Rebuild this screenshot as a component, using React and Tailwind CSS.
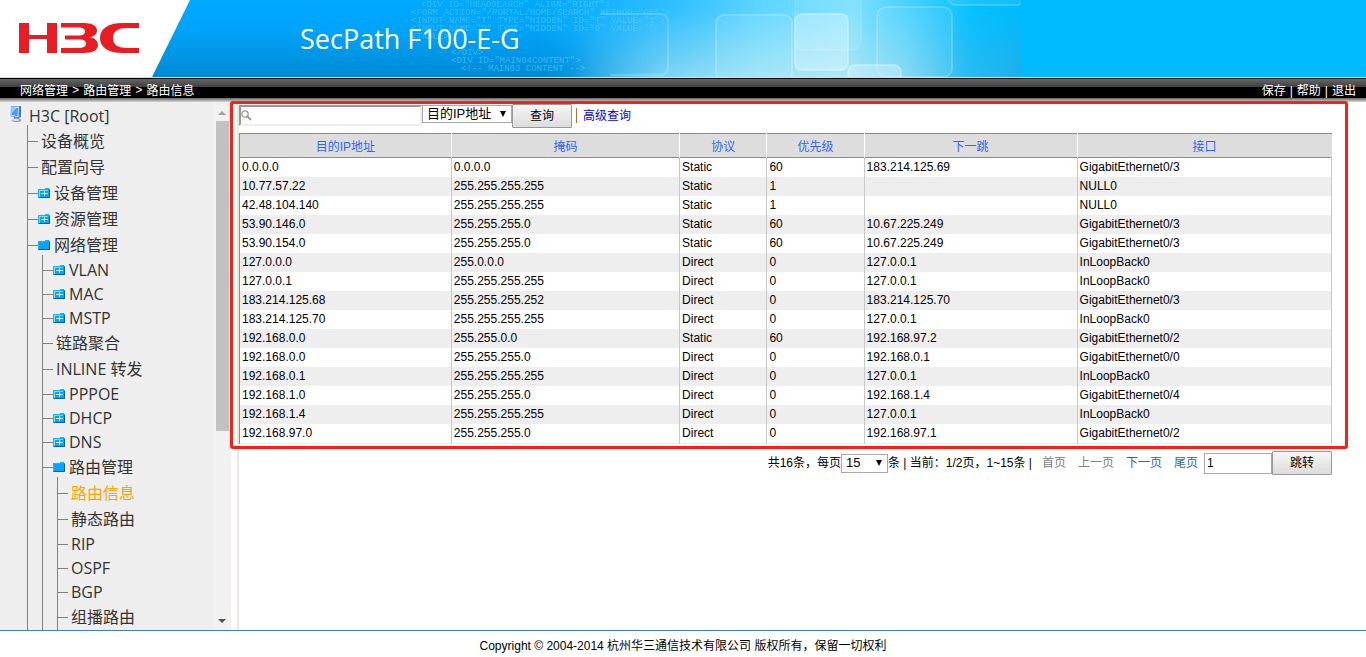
import React from "react";

const TREE = [
  { label: "设备概览" },
  { label: "配置向导" },
  { label: "设备管理", folder: true },
  { label: "资源管理", folder: true },
  {
    label: "网络管理",
    folder: true,
    children: [
      { label: "VLAN", folder: true },
      { label: "MAC", folder: true },
      { label: "MSTP", folder: true },
      { label: "链路聚合" },
      { label: "INLINE 转发" },
      { label: "PPPOE", folder: true },
      { label: "DHCP", folder: true },
      { label: "DNS", folder: true },
      {
        label: "路由管理",
        folder: true,
        children: [
          { label: "路由信息", active: true },
          { label: "静态路由" },
          { label: "RIP" },
          { label: "OSPF" },
          { label: "BGP" },
          { label: "组播路由" },
        ],
      },
    ],
  },
];

const COLUMNS = ["目的IP地址", "掩码", "协议", "优先级", "下一跳", "接口"];

const ROUTES = [
  ["0.0.0.0", "0.0.0.0", "Static", "60", "183.214.125.69", "GigabitEthernet0/3"],
  ["10.77.57.22", "255.255.255.255", "Static", "1", "", "NULL0"],
  ["42.48.104.140", "255.255.255.255", "Static", "1", "", "NULL0"],
  ["53.90.146.0", "255.255.255.0", "Static", "60", "10.67.225.249", "GigabitEthernet0/3"],
  ["53.90.154.0", "255.255.255.0", "Static", "60", "10.67.225.249", "GigabitEthernet0/3"],
  ["127.0.0.0", "255.0.0.0", "Direct", "0", "127.0.0.1", "InLoopBack0"],
  ["127.0.0.1", "255.255.255.255", "Direct", "0", "127.0.0.1", "InLoopBack0"],
  ["183.214.125.68", "255.255.255.252", "Direct", "0", "183.214.125.70", "GigabitEthernet0/3"],
  ["183.214.125.70", "255.255.255.255", "Direct", "0", "127.0.0.1", "InLoopBack0"],
  ["192.168.0.0", "255.255.0.0", "Static", "60", "192.168.97.2", "GigabitEthernet0/2"],
  ["192.168.0.0", "255.255.255.0", "Direct", "0", "192.168.0.1", "GigabitEthernet0/0"],
  ["192.168.0.1", "255.255.255.255", "Direct", "0", "127.0.0.1", "InLoopBack0"],
  ["192.168.1.0", "255.255.255.0", "Direct", "0", "192.168.1.4", "GigabitEthernet0/4"],
  ["192.168.1.4", "255.255.255.255", "Direct", "0", "127.0.0.1", "InLoopBack0"],
  ["192.168.97.0", "255.255.255.0", "Direct", "0", "192.168.97.1", "GigabitEthernet0/2"],
];

function Logo() {
  return (
    <svg width="122" height="32" viewBox="18 22 122 32" role="img" aria-label="H3C" fill="#e91c24">
      <rect x="19" y="23" width="10" height="30" />
      <rect x="47" y="23" width="10" height="30" />
      <rect x="29" y="35" width="18" height="4" />
      <path d="M61 23H84C94 23 97 27 97 30.500C97 34.500 94 36.500 90 37.300C95 38.300 98 41 98 45C98 50 93 53 84 53H61V48H78C84 48 86 46.500 86 43.800C86 41 84 39.500 79 39.500H65V35.500H78C83 35.500 85 34 85 31.500C85 29 83 27.500 78 27.500H61Z" />
      <path d="M139 23H123C108 23 100 29 100 38C100 47 108 53 123 53H139V48H128C118 48 113 45 113 38C113 31 118 28 128 28H139Z" />
    </svg>
  );
}

const CODE_LINES = [
  [421, 7, '<DIV ID="HEADSEARCH" ALIGN="RIGHT">'],
  [411, 15, '<FORM ACTION="/PORTAL/HOME/SEARCH" METHOD="GET">'],
  [411, 23, '<INPUT NAME="T" TYPE="HIDDEN" ID="T" VALUE="1">'],
  [411, 31, '<INPUT NAME="D" TYPE="HIDDEN" ID="D" VALUE="">'],
  [411, 39, "<TABLE>"],
  [451, 55, "</DIV>"],
  [451, 63, '<DIV ID="MAIN04CONTENT">'],
  [461, 71, "<!-- MAIN03 CONTENT -->"],
];

function BannerArt() {
  return (
    <svg width="1021" height="77" viewBox="0 0 1021 77" className="block shrink-0" aria-hidden="true">
      <defs>
        <linearGradient id="base" x1="0" y1="0" x2="0" y2="1">
          <stop offset="0" stopColor="#00a8ff" />
          <stop offset="0.4" stopColor="#00a3fa" />
          <stop offset="1" stopColor="#008ad4" />
        </linearGradient>
        <linearGradient id="glow" x1="0" y1="0" x2="1" y2="0">
          <stop offset="0" stopColor="#3cc6ff" stopOpacity="0" />
          <stop offset="0.25" stopColor="#3cc6ff" stopOpacity="0.7" />
          <stop offset="0.45" stopColor="#5cd5ff" />
          <stop offset="0.65" stopColor="#7ce0ff" />
          <stop offset="0.8" stopColor="#38ccff" />
          <stop offset="0.9" stopColor="#06c0ff" />
          <stop offset="1" stopColor="#00bbff" />
        </linearGradient>
        <linearGradient id="haze" x1="0" y1="0" x2="1" y2="0">
          <stop offset="0" stopColor="#a9e6f5" stopOpacity="0" />
          <stop offset="0.22" stopColor="#a0e2f5" stopOpacity="0.7" />
          <stop offset="0.6" stopColor="#b0e8f5" />
          <stop offset="0.75" stopColor="#7cd6f2" />
          <stop offset="0.88" stopColor="#35b9ee" stopOpacity="0.8" />
          <stop offset="1" stopColor="#1ab0ea" />
        </linearGradient>
        <linearGradient id="fade" x1="0" y1="0" x2="0" y2="1">
          <stop offset="0.1" stopColor="#000" />
          <stop offset="1" stopColor="#fff" />
        </linearGradient>
        <mask id="low">
          <rect x="560" width="461" height="77" fill="url(#fade)" />
        </mask>
      </defs>
      <rect width="1021" height="77" fill="url(#base)" />
      <rect x="540" width="481" height="77" fill="url(#glow)" />
      <rect x="570" width="451" height="77" fill="url(#haze)" mask="url(#low)" />
      <g fill="#ffffff" fillOpacity="0.07" stroke="#ffffff" strokeOpacity="0.2" strokeWidth="2">
        <path d="M600 14H660Q668 14 668 22V67Q668 75 660 75H610" fill="none" strokeOpacity="0.18" />
        <rect x="716" y="15" width="76" height="66" rx="8" />
        <rect x="795" y="-20" width="66" height="70" rx="8" strokeOpacity="0.12" />
        <rect x="795" y="14" width="53" height="56" rx="7" fillOpacity="0.28" strokeOpacity="0.3" />
        <rect x="877" y="7" width="75" height="70" rx="9" />
        <rect x="848" y="65" width="53" height="30" rx="7" fillOpacity="0.25" strokeOpacity="0.3" />
        <rect x="948" y="-20" width="76" height="25" rx="8" />
      </g>
      <g fill="#5fd4ff" fillOpacity="0.55" fontSize="9" fontFamily="Liberation Mono, monospace">
        {CODE_LINES.map(([x, y, line]) => (
          <text key={y} x={x} y={y}>{line}</text>
        ))}
      </g>
      <path d="M0 0H190L152 77H0Z" fill="#fff" />
    </svg>
  );
}

function FolderIcon({ open }) {
  return (
    <svg width="12" height="12" viewBox="0 0 12 12" className="shrink-0" aria-hidden="true">
      <path d="M0 2H7V1H11V2H12V11H0Z" fill="#08a4fb" />
      <path d="M0 2.500H7.500V1.500H11M0.500 3V10" stroke="#18b4ff" fill="none" />
      <path d="M1 10.500H11.500V3" stroke="#06629c" fill="none" />
      {!open && <path d="M2 3.500H10M1.500 3V10" stroke="#7fd8ff" fill="none" />}
      {!open && <path d="M3 6.500H10M6.500 4V9" stroke="#d5f3ff" />}
    </svg>
  );
}

function ComputerIcon() {
  return (
    <svg width="14" height="18" viewBox="0 0 14 18" className="shrink-0" aria-hidden="true">
      <path d="M2 1L9 1.500L12 1V12L9 13L1.500 11Z" fill="#4a78c8" />
      <path d="M1.500 1.500L10 2L9.500 12.500L1.500 10.500Z" fill="#c9e4ff" />
      <path d="M2.500 2.500L9 3L8.500 11.300L2.500 9.800Z" fill="#3f9ff0" />
      <path d="M2.500 2.500L7.500 3L2.500 8.500Z" fill="#8fcbfb" />
      <path d="M5 12L10 12.500L10.500 14.500H5Z" fill="#5b7fc4" />
      <ellipse cx="7.500" cy="15.200" rx="4.800" ry="1.900" fill="#9a9fc6" />
      <ellipse cx="6.500" cy="14.800" rx="3.500" ry="1" fill="#dfe3f5" />
    </svg>
  );
}

const isLatin = (s) => /^[A-Z]+$/.test(s);

function TreeNode({ node }) {
  const rowHeight = node.children ? "h-[23px] pt-[3px]" : isLatin(node.label) ? "h-6" : "h-[26px]";
  return (
    <li>
      <div className={`flex items-center ${rowHeight}`}>
        <span className="h-px w-[10px] shrink-0 bg-[#808080]" />
        {node.folder && <FolderIcon open={Boolean(node.children)} />}
        <a
          href="#"
          className={`whitespace-nowrap leading-5 ${node.folder ? "pl-1" : "pl-[3px]"} ${node.active ? "text-[#ffa200]" : ""}`}
        >
          {node.label}
        </a>
      </div>
      {node.children && (
        <ul className="ml-[14px] border-l border-[#808080] pt-[3px]">
          {node.children.map((child) => (
            <TreeNode key={child.label} node={child} />
          ))}
        </ul>
      )}
    </li>
  );
}

function Sidebar() {
  return (
    <nav className="flex w-[231px] shrink-0 bg-[#eeeeee]" aria-label="导航">
      <div className="h-full flex-1 overflow-hidden font-['Open_Sans','Noto_Sans_CJK_SC',sans-serif] text-base text-[#333]">
        <div className="flex h-[23px] items-center pl-[9px]">
          <ComputerIcon />
          <a href="#" className="pl-[6px] pt-[5px] leading-5">H3C [Root]</a>
        </div>
        <ul className="ml-[27px] border-l border-[#808080] pt-[3px]">
          {TREE.map((node) => (
            <TreeNode key={node.label} node={node} />
          ))}
        </ul>
      </div>
      <div className="flex w-[17px] flex-col items-center bg-[#f1f1f1] pl-px pr-[2px]">
        <svg width="8" height="19" viewBox="0 0 8 19" aria-hidden="true"><path d="M0 13L4 9L8 13Z" fill="#a0a0a0" /></svg>
        <div className="flex w-[13px] flex-1 flex-col">
          <div className="h-[63%] bg-[#c1c1c1]" />
        </div>
        <svg width="8" height="17" viewBox="0 0 8 17" aria-hidden="true"><path d="M0 6L4 10L8 6Z" fill="#505050" /></svg>
      </div>
    </nav>
  );
}

function Select({ label, options, className }) {
  return (
    <span className="relative flex">
      <select
        aria-label={label}
        className={`appearance-none border border-[#a9a9a9] bg-white pl-1 text-black ${className}`}
      >
        {options.map((o) => (
          <option key={o}>{o}</option>
        ))}
      </select>
      <svg width="6" height="6" viewBox="0 0 6 6" className="pointer-events-none absolute right-[6px] top-[6px]" aria-hidden="true">
        <path d="M0 0H6L3 6Z" fill="#000" />
      </svg>
    </span>
  );
}

function PushButton({ children }) {
  return (
    <button
      type="button"
      className="h-6 w-[60px] rounded-[1px] border border-[#999] bg-linear-to-b from-[#f6f6f6] to-[#dcdcdc] text-xs text-black"
    >
      {children}
    </button>
  );
}

function SearchBar() {
  return (
    <form className="flex h-6 items-start" onSubmit={(e) => e.preventDefault()}>
      <label className="mt-px flex h-[21px] w-[183px] items-center border-2 border-[#eee] border-l-[#999] border-t-[#999] bg-white">
        <svg width="11" height="11" viewBox="0 0 11 11" className="shrink-0" fill="none" aria-hidden="true">
          <circle cx="4" cy="4" r="3.200" stroke="#999" strokeWidth="1.300" />
          <path d="M6.500 6.500L10 10" stroke="#999" strokeWidth="1.800" />
        </svg>
        <input type="text" aria-label="查询内容" className="h-full w-full min-w-0 bg-transparent px-1 text-xs outline-none" />
      </label>
      <span className="pt-px">
        <Select label="查询字段" options={COLUMNS} className="h-[18px] w-[90px] text-[13px] leading-4" />
      </span>
      <PushButton>查询</PushButton>
      <span className="ml-1 mt-1 h-[15px] w-px bg-[#a8742c]" />
      <a href="#" className="pl-[6px] pt-[3px] leading-[18px] text-[#0000ee]">高级查询</a>
    </form>
  );
}

function RouteTable() {
  return (
    <table className="mt-[5px] w-full table-fixed border-collapse text-left">
      <colgroup>
        <col className="w-[19.4%]" />
        <col className="w-[20.9%]" />
        <col className="w-[8%]" />
        <col className="w-[8.9%]" />
        <col className="w-[19.5%]" />
        <col />
      </colgroup>
      <thead>
        <tr className="h-6 border-y border-[#7b87c8] bg-[#dddddd] text-[#3366ee]">
          {COLUMNS.map((c) => (
            <th key={c} scope="col" className="border-r border-white p-0 pt-[3px] text-center font-normal leading-5 first:border-l first:border-l-[#7b87c8] last:border-r-0">
              {c}
            </th>
          ))}
        </tr>
      </thead>
      <tbody className="border-b border-[#eeeeee]">
        {ROUTES.map((row, i) => (
          <tr key={i} className="h-[19px] odd:bg-white even:bg-[#eeeeee]">
            {row.map((cell, j) => (
              <td key={j} className="border-r border-[#c8c8c8] py-0 pl-[2px] leading-[19px] first:border-l first:border-l-[#7b87c8]">
                {cell}
              </td>
            ))}
          </tr>
        ))}
      </tbody>
    </table>
  );
}

function Pager() {
  return (
    <div className="mt-[7px] flex items-center justify-end whitespace-nowrap">
      <span>共16条，每页</span>
      <Select label="每页条数" options={["15", "30", "50"]} className="h-[19px] w-[47px] text-[13px] leading-4" />
      <span>条 | 当前：1/2页，1~15条 |</span>
      <span className="ml-[10px] mr-[6px] flex gap-3">
        <span className="text-[#808080]">首页</span>
        <span className="text-[#808080]">上一页</span>
        <a href="#" className="text-[#336699]">下一页</a>
        <a href="#" className="text-[#336699]">尾页</a>
      </span>
      <input type="text" aria-label="页码" defaultValue="1" className="h-[21px] w-[68px] border border-[#a9a9a9] bg-white px-[2px] text-xs" />
      <PushButton>跳转</PushButton>
    </div>
  );
}

export default function App() {
  return (
    <div className="flex h-screen flex-col bg-white font-['Liberation_Sans','Noto_Sans_CJK_SC',sans-serif] text-xs text-black">
      <header className="shrink-0">
        <div className="relative flex h-[78px] overflow-hidden border-b border-[#c4e4f0] bg-[#00bbff]">
          <BannerArt />
          <div className="absolute left-[18px] top-[22px]">
            <Logo />
          </div>
          <h1 className="absolute left-[300px] top-[19px] font-['Open_Sans',sans-serif] text-[27px] leading-10 text-white">
            SecPath F100-E-G
          </h1>
        </div>
        <div className="flex h-5 items-end justify-between border-t border-black bg-linear-to-b from-[#666] from-0% via-[#404040] via-42% to-black to-42% pl-5 pr-[10px] leading-[14px] text-white">
          <p className="flex gap-1">
            <span>网络管理</span>
            <span className="font-['Liberation_Mono',monospace]">&gt;</span>
            <span>路由管理</span>
            <span className="font-['Liberation_Mono',monospace]">&gt;</span>
            <span>路由信息</span>
          </p>
          <p className="flex gap-1">
            <a href="#">保存</a>|<a href="#">帮助</a>|<a href="#">退出</a>
          </p>
        </div>
        <div className="h-1 bg-linear-to-b from-[#666] to-[#d8d8d8]" />
      </header>
      <div className="flex min-h-0 flex-1">
        <Sidebar />
        <main className="min-w-0 flex-1 pl-[6px]">
          <div className="h-full border-l-2 border-[#ece9d8] pr-[34px] pt-[2px]">
            <section className="relative">
              <SearchBar />
              <RouteTable />
              <div className="pointer-events-none absolute -bottom-[5px] -left-[9px] -right-[16px] -top-[3px] rounded-[3px] border-3 border-[#ff1e12]" />
            </section>
            <Pager />
          </div>
        </main>
      </div>
      <footer className="shrink-0 border-t border-[#3d7cb8] pt-1 text-center leading-[22px]">
        Copyright © 2004-2014 杭州华三通信技术有限公司 版权所有，保留一切权利
      </footer>
    </div>
  );
}
